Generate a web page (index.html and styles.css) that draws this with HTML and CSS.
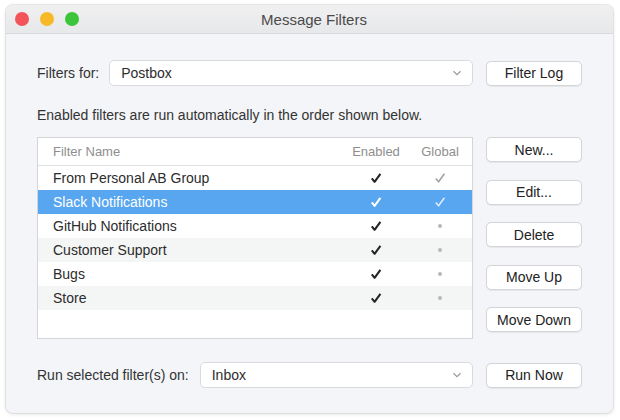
FILE: index.html
```html
<!DOCTYPE html>
<html>
<head>
<meta charset="utf-8">
<link rel="stylesheet" href="styles.css">
</head>
<body>
<div class="window">
  <div class="titlebar">
    <div class="lights">
      <span class="light red"></span>
      <span class="light yellow"></span>
      <span class="light green"></span>
    </div>
    <div class="title">Message Filters</div>
  </div>
  <div class="content">
    <div class="row-top">
      <span class="label">Filters for:</span>
      <div class="popup popup-top"><span>Postbox</span><svg class="chev" width="10" height="6" viewBox="0 0 10 6"><path d="M1.5 1.2 L5 4.6 L8.5 1.2" fill="none" stroke="#9a9a9a" stroke-width="1.2"/></svg></div>
      <div class="btn">Filter Log</div>
    </div>
    <div class="hint">Enabled filters are run automatically in the order shown below.</div>
    <div class="main">
      <div class="table">
        <div class="thead">
          <span class="c-name">Filter Name</span>
          <span class="c-mid">Enabled</span>
          <span class="c-mid">Global</span>
        </div>
        <div class="tr">
          <span class="c-name">From Personal AB Group</span>
          <span class="c-mid"><svg class="chk" width="12" height="12" viewBox="0 0 12 12"><path d="M1.8 6.4 L4.6 9.8 L10.4 1.8" fill="none" stroke="#262626" stroke-width="2.1" stroke-linejoin="round"/></svg></span>
          <span class="c-mid"><svg class="chk" width="12" height="12" viewBox="0 0 12 12"><path d="M1.8 6.4 L4.6 9.8 L10.4 1.8" fill="none" stroke="#a3a3a3" stroke-width="1.6" stroke-linejoin="round"/></svg></span>
        </div>
        <div class="tr sel">
          <span class="c-name">Slack Notifications</span>
          <span class="c-mid"><svg class="chk" width="12" height="12" viewBox="0 0 12 12"><path d="M1.8 6.4 L4.6 9.8 L10.4 1.8" fill="none" stroke="#ffffff" stroke-width="2.1" stroke-linejoin="round"/></svg></span>
          <span class="c-mid"><svg class="chk" width="12" height="12" viewBox="0 0 12 12"><path d="M1.8 6.4 L4.6 9.8 L10.4 1.8" fill="none" stroke="#dcebfb" stroke-width="1.6" stroke-linejoin="round"/></svg></span>
        </div>
        <div class="tr">
          <span class="c-name">GitHub Notifications</span>
          <span class="c-mid"><svg class="chk" width="12" height="12" viewBox="0 0 12 12"><path d="M1.8 6.4 L4.6 9.8 L10.4 1.8" fill="none" stroke="#262626" stroke-width="2.1" stroke-linejoin="round"/></svg></span>
          <span class="c-mid"><span class="dot"></span></span>
        </div>
        <div class="tr alt">
          <span class="c-name">Customer Support</span>
          <span class="c-mid"><svg class="chk" width="12" height="12" viewBox="0 0 12 12"><path d="M1.8 6.4 L4.6 9.8 L10.4 1.8" fill="none" stroke="#262626" stroke-width="2.1" stroke-linejoin="round"/></svg></span>
          <span class="c-mid"><span class="dot"></span></span>
        </div>
        <div class="tr">
          <span class="c-name">Bugs</span>
          <span class="c-mid"><svg class="chk" width="12" height="12" viewBox="0 0 12 12"><path d="M1.8 6.4 L4.6 9.8 L10.4 1.8" fill="none" stroke="#262626" stroke-width="2.1" stroke-linejoin="round"/></svg></span>
          <span class="c-mid"><span class="dot"></span></span>
        </div>
        <div class="tr alt">
          <span class="c-name">Store</span>
          <span class="c-mid"><svg class="chk" width="12" height="12" viewBox="0 0 12 12"><path d="M1.8 6.4 L4.6 9.8 L10.4 1.8" fill="none" stroke="#262626" stroke-width="2.1" stroke-linejoin="round"/></svg></span>
          <span class="c-mid"><span class="dot"></span></span>
        </div>
      </div>
      <div class="side">
        <div class="btn">New...</div>
        <div class="btn">Edit...</div>
        <div class="btn">Delete</div>
        <div class="btn">Move Up</div>
        <div class="btn">Move Down</div>
      </div>
    </div>
    <div class="row-bottom">
      <span class="label">Run selected filter(s) on:</span>
      <div class="popup popup-bottom"><span>Inbox</span><svg class="chev" width="10" height="6" viewBox="0 0 10 6"><path d="M1.5 1.2 L5 4.6 L8.5 1.2" fill="none" stroke="#9a9a9a" stroke-width="1.2"/></svg></div>
      <div class="btn">Run Now</div>
    </div>
  </div>
</div>
</body>
</html>
```

FILE: styles.css
```css
html, body {
  margin: 0;
  padding: 0;
  background: #ffffff;
}
body {
  width: 620px;
  height: 420px;
  overflow: hidden;
  font-family: "Liberation Sans", Arial, sans-serif;
  font-size: 14px;
  color: #2c2c2c;
}
.window {
  margin: 5px 0 0 6px;
  width: 607px;
  height: 408px;
  box-sizing: border-box;
  border-radius: 7px;
  background: #f3f5f8;
  box-shadow: 0 0 0 1px rgba(0,0,0,0.07), 0 1px 4px rgba(0,0,0,0.12);
  overflow: hidden;
  display: flex;
  flex-direction: column;
}
.titlebar {
  height: 29px;
  flex: none;
  display: flex;
  align-items: center;
  background: linear-gradient(#f0f0f1, #e7e8ea);
  border-bottom: 1px solid #d7d8da;
  box-sizing: border-box;
}
.lights {
  display: flex;
  gap: 11px;
  padding-left: 9px;
  width: 100px;
  flex: none;
}
.light {
  width: 14px;
  height: 14px;
  border-radius: 50%;
  display: block;
}
.red { background: #f2545a; }
.yellow { background: #f8b929; }
.green { background: #3cc43a; }
.title {
  flex: 1;
  text-align: center;
  font-size: 15px;
  color: #4a4a4a;
  margin-right: 100px;
}
.content {
  padding: 26px 31px 0 31px;
  display: flex;
  flex-direction: column;
}
.row-top, .row-bottom {
  display: flex;
  align-items: center;
  height: 26px;
}
.label {
  flex: none;
  color: #333;
}
.popup {
  height: 26px;
  box-sizing: border-box;
  background: #ffffff;
  border: 1px solid #d9dadd;
  border-radius: 5px;
  display: flex;
  align-items: center;
  justify-content: space-between;
  padding: 0 10px 0 11px;
  color: #2c2c2c;
}
.popup-top {
  margin-left: 10px;
  flex: 1;
}
.popup-bottom {
  margin-left: 11px;
  flex: 1;
}
.chev { display: block; }
.btn {
  width: 96px;
  height: 25px;
  box-sizing: border-box;
  background: #ffffff;
  border: 1px solid #d3d5d8;
  border-radius: 5px;
  box-shadow: 0 0.5px 1px rgba(0,0,0,0.06);
  display: flex;
  align-items: center;
  justify-content: center;
  color: #222;
  flex: none;
}
.row-top .btn, .row-bottom .btn {
  margin-left: 13px;
}
.hint {
  margin-top: 21px;
  height: 16px;
  line-height: 16px;
  color: #333;
}
.main {
  margin-top: 14px;
  display: grid;
  grid-template-columns: 1fr 96px;
  column-gap: 13px;
  height: 202px;
}
.table {
  background: #ffffff;
  border: 1px solid #d3d5d8;
  box-sizing: border-box;
  display: flex;
  flex-direction: column;
}
.thead, .tr {
  display: grid;
  grid-template-columns: 1fr 64px 64px;
  align-items: center;
}
.thead {
  height: 27px;
  border-bottom: 1px solid #e0e1e3;
  color: #8e8e8e;
  font-size: 13px;
}
.tr {
  height: 24px;
}
.tr.alt { background: #f4f5f5; }
.tr.sel { background: #58a6ef; color: #ffffff; }
.c-name {
  padding-left: 15px;
}
.c-mid {
  display: flex;
  justify-content: center;
  align-items: center;
}
.chk { display: block; }
.dot {
  width: 4px;
  height: 4px;
  border-radius: 50%;
  background: #b8b8b8;
  display: block;
}
.side {
  display: flex;
  flex-direction: column;
  gap: 17.5px;
}
.row-bottom {
  margin-top: 23px;
}
```
